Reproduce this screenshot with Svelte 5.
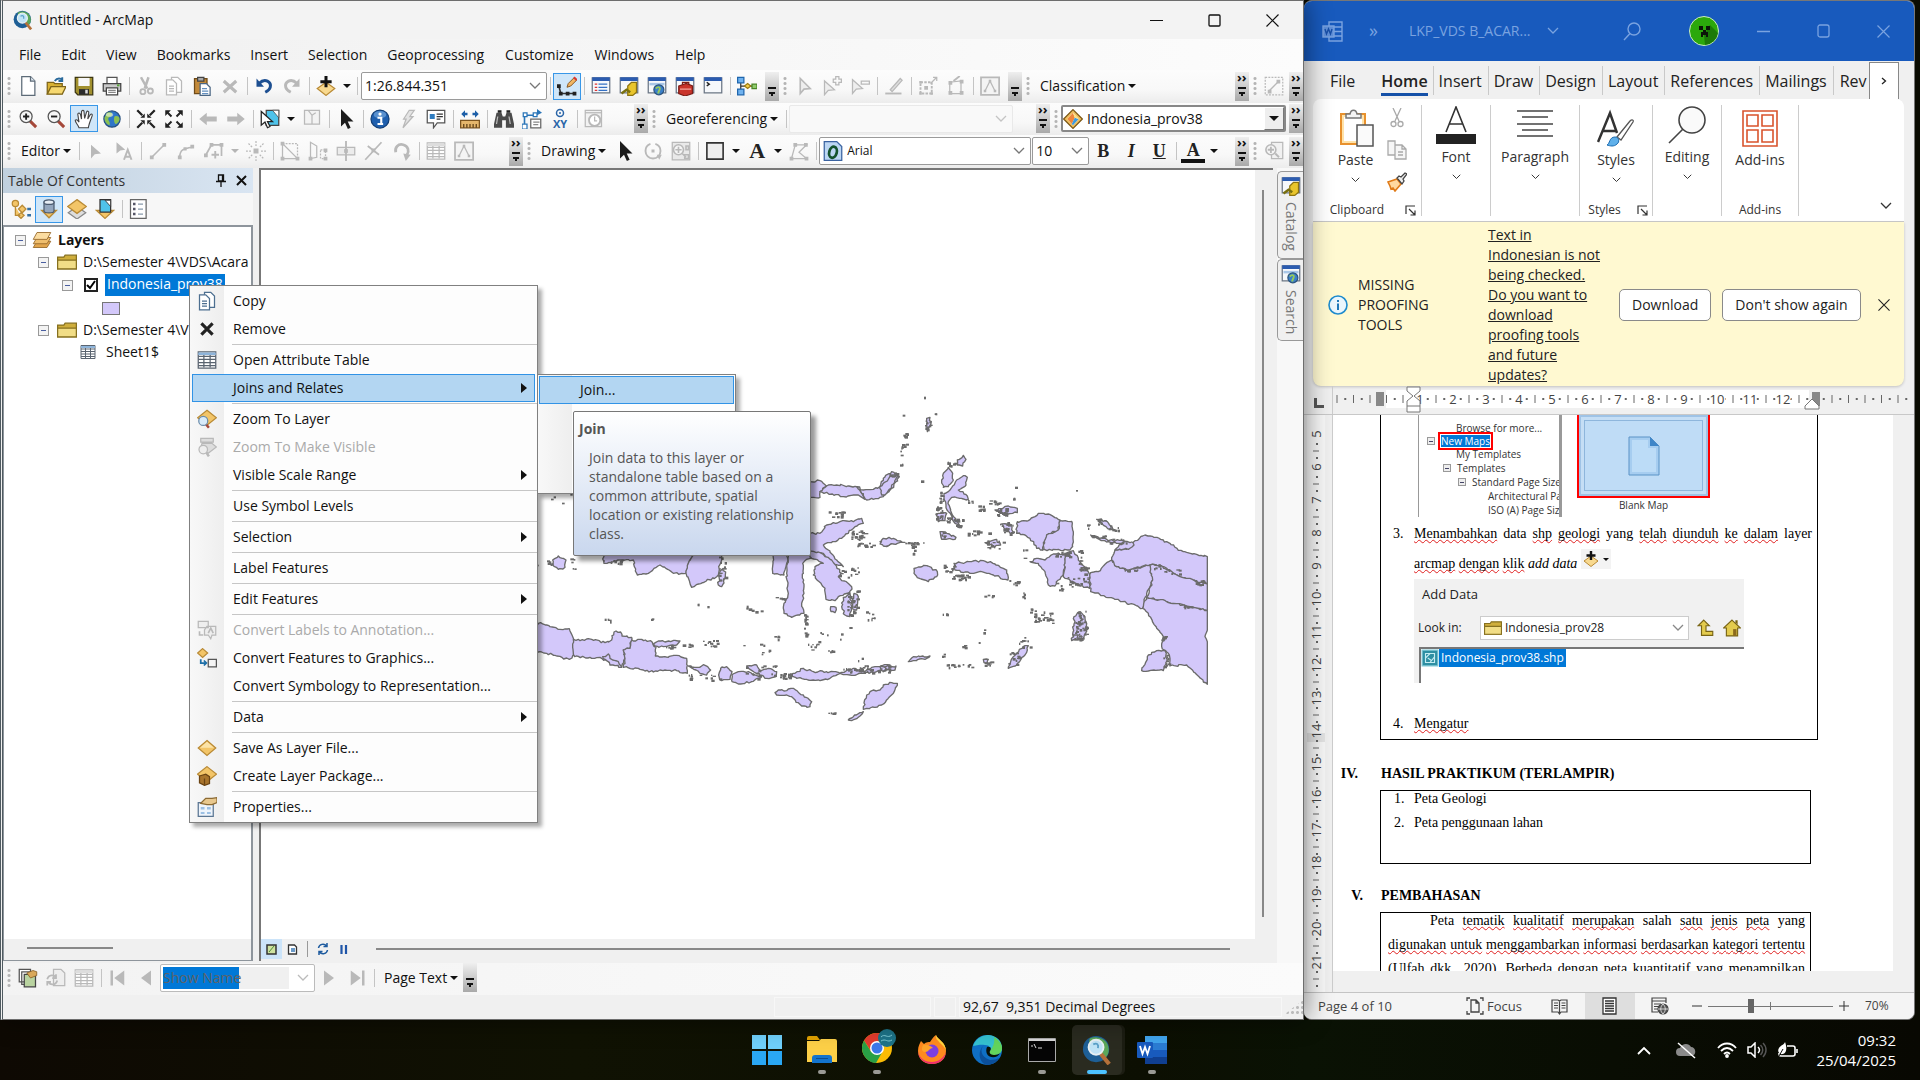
<script>
  // ---- Icon artwork, drawn on a 16 x 16 grid ----
  const G = '#b9b9b9';
  const diamond = '<path d="M8 2l7 6-7 6-7-6z" fill="#f3c568" stroke="#b98a35"/><path d="M8 3l5.500 4.800H2.500z" fill="#fbe3a8"/>';
  const win = (inner) => '<path d="M1 1.500h14v12H1z" fill="#f6f8fb" stroke="#6b7684"/><path d="M1 1h14v3H1z" fill="#2c5cb0"/>' + inner;
  const globe = '<circle cx="8" cy="8" r="6.500" fill="#2f76c8" stroke="#27507f"/><path d="M4 3c3-1 5 0 4 2s-3 1-3 3 2 2 1 5C3 12 2 9 2 7zM10 6c2-1 4 0 4 2s-2 4-3 4-2-4-1-6z" fill="#8cc152"/><ellipse cx="6" cy="4.500" rx="3" ry="1.600" fill="#fff" opacity=".5"/>';
  const lens = (s) => '<path d="M9.500 9.500l5 5" stroke="#a5483a" stroke-width="2.400"/><circle cx="6.500" cy="6" r="4.800" fill="#f7f7f7" stroke="#555"/>' + s;
  const pageG = (c) => `<path d="M6 1h5l3 3v9H6z" fill="#fff" stroke="${c}"/><path d="M2 3h5l3 3v9H2z" fill="#fff" stroke="${c}"/><path d="M4 8h4M4 10h4M4 12h4" stroke="${c}"/>`;
  const table = (c, h) => `<path d="M1 1.500h14v13H1z" fill="#fff" stroke="${c}"/><path d="M1 2h14v2H1z" fill="${h}"/><path d="M1 5h14M1 7.500h14M1 10h14M1 12.500h14M5.500 4v10M10.500 4v10" stroke="${c}"/>`;
  const icons = {
    new: '<path d="M3 .5h7l3.500 3.500v11.500H3z" fill="#fff" stroke="#5d6b78"/><path d="M10 .5v3.500h3.500" fill="#dde6ee" stroke="#5d6b78"/>',
    open: '<path d="M1 5h5l1 1h6v8H1z" fill="#d9b233" stroke="#7d6418"/><path d="M1 14.500l3-6h12l-3 6z" fill="#f6d870" stroke="#7d6418"/><path d="M7 4c2-3 5-2 6-1M13 1v3h-3" fill="none" stroke="#2a6a9c" stroke-width="1.500"/>',
    save: '<path d="M1 1h14v14H3l-2-2z" fill="#a1902e" stroke="#3b3512"/><path d="M3.500 1.500h9V8h-9z" fill="#f7f7f7"/><path d="M4 10.500h8V15H4z" fill="#2b2b2b"/><path d="M9 11h2v3H9z" fill="#ddd"/>',
    print: '<path d="M4 6V1h8v5" fill="#fff" stroke="#555"/><path d="M1 6h14v6H1z" fill="#c9c9c9" stroke="#444"/><path d="M3.500 9.500h9V15h-9z" fill="#fff" stroke="#444"/><path d="M5 11.500h6M5 13h6" stroke="#888"/><path d="M12 7.500h2" stroke="#58a33a" stroke-width="1.500"/>',
    cut: `<path d="M4 1l5 9M10 1L7 10" stroke="${G}" stroke-width="2"/><circle cx="5.500" cy="12.500" r="2" fill="none" stroke="${G}" stroke-width="1.500"/><circle cx="11.500" cy="12" r="2" fill="none" stroke="${G}" stroke-width="1.500"/>`,
    copyG: pageG(G),
    copyC: pageG('#4d6f90'),
    paste: '<path d="M2 2h10v12H2z" fill="#c38a3a" stroke="#6f4b19"/><path d="M4.500 1h5v3h-5z" fill="#aaa" stroke="#444"/><path d="M6.500 6h5l3 3v6.500h-8z" fill="#fff" stroke="#4b6784"/><path d="M8 10h4M8 12h5M8 14h5" stroke="#6390c0"/>',
    delG: `<path d="M3 4l10 9M13 4L3 13" stroke="${G}" stroke-width="2.500"/>`,
    del: '<path d="M3.500 3.500l9 9M12.500 3.500l-9 9" stroke="#222" stroke-width="2.500"/>',
    undo: '<path d="M4 6c5-5 10-1 9 3-.5 2-2 3-4 4" fill="none" stroke="#1d4f91" stroke-width="2.400"/><path d="M2 2v6.500h6z" fill="#1d4f91"/>',
    redo: `<path d="M12 6C7 1 2 5 3 9c.5 2 2 3 4 4" fill="none" stroke="${G}" stroke-width="2.400"/><path d="M14 2v6.500H8z" fill="${G}"/>`,
    add: '<path d="M8 5l7 5-7 5.500L1 10z" fill="#f8d98f" stroke="#b98a35"/><path d="M8 0v9M3.500 4.500h9" stroke="#111" stroke-width="2.400"/>',
    editor: '<path d="M1.500 8L3 14h11" fill="none" stroke="#333" stroke-width="1.300"/><path d="M0 6.500h3v3H0zM1.500 12.500h3v3h-3zM7 12.500h3v3H7zM12.500 12.500h3v3h-3z" fill="#222"/><path d="M8 9l1-3 5-5 2 2-5 5z" fill="#f1b562" stroke="#8b5a24" stroke-width=".8"/><path d="M13.500 1l2.200 2.200" stroke="#d33" stroke-width="1.500"/>',
    wToc: win('<path d="M3 6.500h2M3 9h2M3 11.500h2" stroke="#d33"/><path d="M6 6.500h7M6 9h7M6 11.500h7" stroke="#3470c4"/>'),
    wCat: win('<path d="M7 8l3-3h4v8l-3 2.500H7z" fill="#e9c52c" stroke="#8d7410"/><path d="M2 14l4-3 3 2" stroke="#7a7010" stroke-width="2" fill="none"/>'),
    wSearch: win('<path d="M2 5.500h12v2H2z" fill="#a9c7e8"/><circle cx="9.500" cy="11" r="4" fill="#3b7fc9" stroke="#2c557f"/><path d="M7 10c2-2 4-1 3 1s-1 2-1 3" stroke="#97ca5a" stroke-width="1.500" fill="none"/>'),
    wTool: win('<path d="M3 8l6-2 5 2v6l-6 2-5-2z" fill="#c9342b" stroke="#7c1c16"/><path d="M6 7V5h5v2" fill="none" stroke="#7c1c16"/><path d="M4 10.500h9" stroke="#f2a49e"/>'),
    wPy: win('<path d="M3 5l2 1.500L3 8" fill="none" stroke="#222" stroke-width="1.200"/>'),
    model: '<path d="M3 4v8M3 8h10" stroke="#333"/><path d="M.5 1h5v4.500h-5z" fill="#6fb2ef" stroke="#1f66ad"/><path d="M.5 10.500h5V15h-5z" fill="#6fb2ef" stroke="#1f66ad"/><path d="M6 8l2.500-2L11 8l-2.500 2z" fill="#f5cf49" stroke="#9c7a10"/><path d="M12 6.500h4v3.500h-4z" fill="#8ecb6a" stroke="#4a8528"/>',
    ptrG: `<path d="M5 2v12l3-3.500 5-.5z" fill="#eee" stroke="${G}" stroke-width="1.300"/>`,
    ptrGF: `<path d="M4 3v11l3-3.500 5-.5z" fill="${G}"/>`,
    ptrA: `<path d="M2 1v9l3-2.500 4-.5z" fill="${G}"/><path d="M8 15l3-8 3 8M9 12.500h4" fill="none" stroke="${G}" stroke-width="1.600"/>`,
    ptrPlus: `<path d="M2 4v11l3-3.500 5-.5z" fill="#eee" stroke="${G}"/><path d="M9 2.500h2V.5h2.500v2h2V5h-2v2H11V5H9z" fill="none" stroke="${G}"/>`,
    ptrMinus: `<path d="M2 3v11l3-3.500 5-.5z" fill="#eee" stroke="${G}"/><path d="M9 4h6.500v2.500H9z" fill="none" stroke="${G}"/>`,
    pencilG: `<path d="M1 14h13" stroke="${G}" stroke-width="1.500"/><path d="M5 11l8-9 1.500 1.500-8 9z" fill="#ddd" stroke="${G}"/>`,
    gridG: `<path d="M2 5h9v9H2z" fill="none" stroke="${G}" stroke-width="1.500" stroke-dasharray="2 1"/><path d="M5 8h3v3H5zM1 4h2v2H1zM1 13h2v2H1zM10 13h2v2h-2z" fill="${G}"/><path d="M10 6l5-5M12 1h3v3" stroke="${G}" fill="none"/>`,
    polyG: `<path d="M3 5l9-1v10H3z" fill="none" stroke="${G}"/><path d="M2 4h3v3H2zM11 3h3v3h-3zM2 12h3v3H2zM11 12h3v3h-3z" fill="${G}"/><path d="M6 4l5-4" stroke="${G}" stroke-width="1.500"/>`,
    boxA: `<path d="M.8 1h14.500v14H.8z" fill="#f4f4f4" stroke="${G}" stroke-width="1.400"/><path d="M4 12l4-8 4 8" fill="none" stroke="${G}"/><path d="M3 11h2v2H3zM7 3h2v2H7zM11 11h2v2h-2z" fill="${G}"/>`,
    lineBox: `<path d="M1 1h14v14H1z" fill="none" stroke="${G}" stroke-dasharray="1.500 1"/><path d="M4 12l8-8" stroke="${G}"/><path d="M3 11h3v3H3zM10 3h3v3h-3z" fill="${G}"/>`,
    zoomIn: lens('<path d="M6.500 3.500v5M4 6h5" stroke="#222" stroke-width="1.500"/>'),
    zoomOut: lens('<path d="M4 6h5" stroke="#222" stroke-width="1.500"/>'),
    pan: '<path d="M4 15c-1-3-3-4-3-6 1-1 2 0 3 1.500L3 4c1-1.500 2-.5 2.200.5L6 8V2c.5-1.500 2-1 2 0l.5 5.500L10 2.500c.5-1.300 2-.8 1.800.5L11 8l2-3.500c1-1 2-.2 1.500 1L12.500 11c-.5 2-1 3-1 4z" fill="#fff" stroke="#444" stroke-width=".9"/>',
    globe,
    inArr: '<g fill="#222"><path d="M7 7H3.500L7 3.500zM9 7V3.500L12.500 7zM7 9v3.500L3.500 9zM9 9h3.500L9 12.500z"/><path d="M1 1l4 4M15 1l-4 4M1 15l4-4M15 15l-4-4" stroke="#222" stroke-width="1.800"/></g>',
    outArr: '<g fill="#222"><path d="M1 1h4.500L1 5.500zM15 1v4.500L10.500 1zM1 15v-4.500L5.500 15zM15 15h-4.500l4.500-4.500z"/><path d="M2 2l4 4M14 2l-4 4M2 14l4-4M14 14l-4-4" stroke="#222" stroke-width="1.600"/></g>',
    left: `<path d="M1 8l6-5v3h8v4H7v3z" fill="${G}"/>`,
    right: `<path d="M15 8L9 3v3H1v4h8v3z" fill="${G}"/>`,
    selF: '<path d="M5 1h10v12H5z" fill="#4fc3ea" stroke="#444"/><path d="M10 1l5 6V1z" fill="#fff" stroke="#444" stroke-width=".6"/><path d="M1 2v11l3-2.500 2 4.500 2-1-2-4h4z" fill="#fff" stroke="#222"/>',
    clrF: `<path d="M2 1h12v11H2z" fill="#f3f3f3" stroke="${G}"/><path d="M5 1l3 4 3-2M8 5v7" stroke="${G}" fill="none"/>`,
    ptr: '<path d="M4 0v14l3.200-3 2.300 5 2.200-1-2.300-5H14z" fill="#1c1c1c"/>',
    info: '<circle cx="8" cy="8" r="7.200" fill="#1f5fae" stroke="#123f78"/><ellipse cx="8" cy="4.500" rx="5" ry="3" fill="#7fb0e4" opacity=".6"/><path d="M6 7h3v5h1.500M6 12h4" stroke="#fff" stroke-width="1.700" fill="none"/><circle cx="8" cy="4" r="1.300" fill="#fff"/>',
    bolt: `<path d="M9 1h4L9.500 6H12L4 15l2.500-7H4.500z" fill="#e4e4e4" stroke="${G}"/>`,
    popup: '<path d="M1 1h14v10H9l-3 4v-4H1z" fill="#fff" stroke="#555"/><path d="M3 4h4v4H3z" fill="#2f7cc0"/><path d="M8.500 4h5M8.500 6h5M8.500 8h3" stroke="#333"/>',
    measure: '<path d="M1 4l3-3v2h2v2H4v2zM15 4l-3-3v2h-2v2h2v2z" fill="#1d5fa8"/><path d="M.5 9h15v6H.5z" fill="#e5b66c" stroke="#7c5420"/><path d="M3 12v3M5.500 12v3M8 12v3M10.500 12v3M13 12v3" stroke="#5e3e14"/>',
    bino: '<path d="M2 3h4l1 3h2l1-3h4l2 9v3H9.500V9h-3v6H0v-3z" fill="#4b4b4b"/><path d="M3 1h3v2H3zM10 1h3v2h-3z" fill="#222"/><path d="M3 6l-1 6M12 6l1 6" stroke="#bbb"/>',
    route: '<path d="M2 14V5h8" fill="none" stroke="#2a75b8" stroke-width="1.300"/><path d="M0 12h4v4H0zM1 3h3v3H1zM9 3h3v3H9z" fill="#fff" stroke="#2a75b8"/><path d="M12 0l4 3-4 2z" fill="#2a75b8"/><path d="M7 8h8v7H7z" fill="#fff" stroke="#666"/><path d="M9 10.500h5M9 12.500h4" stroke="#888"/>',
    timeG: `<path d="M1 1h13v13H1z" fill="#f2f2f2" stroke="${G}"/><path d="M1 3h13" stroke="${G}"/><circle cx="8.500" cy="9" r="4.500" fill="#fff" stroke="${G}" stroke-width="1.500"/><path d="M8.500 6v3.500h2" stroke="${G}" fill="none"/>`,
    segG: `<path d="M3 13L13 3" stroke="${G}" stroke-width="1.300"/><path d="M1.500 11.500h3v3h-3zM11.500 1.500h3v3h-3z" fill="${G}"/>`,
    arcG: `<path d="M3 13c0-6 3-7 10-8" fill="none" stroke="${G}" stroke-width="1.300"/><path d="M1.500 11.500h3v3h-3zM11.500 3h3v3h-3zM6 5h2.500v2.500H6z" fill="${G}"/>`,
    traceG: `<path d="M1 12l5-9h8v9" fill="none" stroke="${G}" stroke-width="1.400"/><path d="M4.500 1.500h3v3h-3zM12.500 1.500h3v3h-3zM0 10h3v3H0z" fill="${G}"/><path d="M9 8v6M6 11h6" stroke="${G}" stroke-width="1.500"/>`,
    burstG: `<path d="M6 6h4v4H6z" fill="${G}"/><path d="M8 0v4M8 12v4M0 8h4M12 8h4M2 2l3 3M11 11l3 3M14 2l-3 3M5 11l-3 3" stroke="${G}" stroke-dasharray="1.500 1"/>`,
    cutG: `<path d="M2 2v12h12z" fill="none" stroke="${G}"/><path d="M2 2h12v12" fill="none" stroke="${G}" stroke-dasharray="1.500 1"/><path d="M.5.5h3v3h-3zM.5 12.500h3v3h-3zM12.500 12.500h3v3h-3z" fill="${G}"/>`,
    splitG: `<path d="M2 1v13l5-1V4z" fill="none" stroke="${G}"/><path d="M10 7h4v7h-4z" fill="none" stroke="${G}" stroke-dasharray="1.500 1"/><path d="M.5 12.500h3v3h-3zM12.500 6h3v3h-3zM12.500 12.500h3v3h-3z" fill="${G}"/>`,
    centerG: `<path d="M1 5h14v6H1z" fill="#ececec" stroke="${G}"/><path d="M8 0v16" stroke="${G}" stroke-width="1.500"/><path d="M6.500 6.500h3v3h-3z" fill="${G}"/>`,
    crossG: `<path d="M1 15L14 1M3 4l9 7" stroke="${G}" stroke-width="1.400"/><path d="M6 6h3v3H6z" fill="${G}"/>`,
    rotG: `<path d="M3 9c-1-4 2-7 6-6s5 5 3 8" fill="none" stroke="${G}" stroke-width="2.200"/><path d="M9 10l2 6 4-5z" fill="${G}"/>`,
    tableG: table(G, '#ddd'),
    tableC: table('#5a6470', '#8eb4da'),
    rotD: `<circle cx="8" cy="8" r="6" fill="none" stroke="${G}" stroke-width="1.500" stroke-dasharray="26 4"/><path d="M6.800 6.800h2.400v2.400H6.800zM11 11l4 0-2 4z" fill="${G}"/>`,
    zoomG: `<path d="M6 1h9v13H6z" fill="#f1f1f1" stroke="${G}"/><circle cx="5.500" cy="7" r="4" fill="#f6f6f6" stroke="${G}" stroke-width="1.300"/><path d="M5.500 4.500v5M3 7h5M9 10l3 3" stroke="${G}" stroke-width="1.500"/>`,
    gridZ: `<path d="M1 1h14v14H1z" fill="#e9e9e9" stroke="${G}"/><circle cx="6" cy="7" r="4" fill="#f6f6f6" stroke="${G}" stroke-width="1.300"/><path d="M6 4.500v5M3.500 7h5M9 10l3 3M12 4h2v3h-2zM11 11h3v3h-3z" stroke="${G}" stroke-width="1.300"/>`,
    rect: '<path d="M1.500 1.500h13v13h-13z" fill="#eee" stroke="#333" stroke-width="1.300"/>',
    nodesG: `<path d="M2 14L5 3h9L8 9l6 5z" fill="none" stroke="${G}"/><path d="M3.500 1.500h3v3h-3zM12 1.500h3v3h-3zM.5 12.500h3v3h-3zM12.500 12.500h3v3h-3z" fill="${G}"/>`,
    layer3: '<path d="M4 9h11l-3 5H1z" fill="#e2a54c" stroke="#96682a" stroke-width=".7"/><path d="M4 6h11l-3 5H1z" fill="#efbe6d" stroke="#96682a" stroke-width=".7"/><path d="M4 2h11l-3 5.500H1z" fill="#fbdca0" stroke="#96682a" stroke-width=".7"/>',
    folder: '<path d="M.5 4h5l1-1.500h9v11H.5z" fill="#cfae3c" stroke="#86701f"/><path d="M.5 6.500h15v7H.5z" fill="#f1dd86" stroke="#86701f"/>',
    tDraw: '<circle cx="3.500" cy="3.500" r="2.500" fill="#f3c568" stroke="#b98a35"/><path d="M3.500 6v7h4M9 5l3 3-3 3-3-3zM8 11l2.500 2-2.500 2.500L5.500 13z" fill="#f3c568" stroke="#b98a35"/><path d="M13 8h3M13 13h3" stroke="#3470a4" stroke-width="2"/>',
    tSrc: '<path d="M2 9l6 6 6-6z" fill="#f3c568" stroke="#b98a35"/><path d="M4 2.500v7c0 2 8 2 8 0v-7z" fill="#93a6be" stroke="#4b5b70"/><ellipse cx="8" cy="2.500" rx="4" ry="1.800" fill="#e6edf5" stroke="#4b5b70"/>',
    tVis: '<path d="M8 6l7 5-7 5-7-5z" fill="#ddd" stroke="#888"/><path d="M8 .5l7.500 5.500L8 11.500.5 6z" fill="#f3c568" stroke="#b98a35"/>',
    tSel: '<path d="M1 9l7 6.500L15 9z" fill="#f3c568" stroke="#b98a35"/><path d="M4 .5h8.500v10H4z" fill="#4fc3ea" stroke="#333"/><path d="M8 1l4.500 5V1z" fill="#fff" stroke="#333" stroke-width=".7"/>',
    tOpt: '<path d="M2 .5h12.500v15H2z" fill="#fff" stroke="#666"/><path d="M4 3h2v2H4zM4 7h2v2H4zM4 11h2v2H4z" fill="#556"/><path d="M8 4h4M8 8h4M8 12h4" stroke="#89a"/>',
    zoomLayer: '<path d="M8 1l7.500 6L8 13 .5 7z" fill="#f3c568" stroke="#b98a35"/><path d="M7 12l2.500 3" stroke="#a5483a" stroke-width="2"/><circle cx="5" cy="9.500" r="3.600" fill="#d8ebfa" stroke="#6b8cab"/>',
    zoomVis: `<path d="M3 1h10v3H3zM4 5h8l3.500 3L9 13 3 9z" fill="#ddd" stroke="${G}"/><circle cx="5" cy="10" r="3.400" fill="#eee" stroke="${G}"/><path d="M7.500 12.500l2 3" stroke="${G}" stroke-width="2"/>`,
    labA: `<path d="M1 1h8v5H1zM8 5h7v7h-3l-1 3-2-3H6V8z" fill="#eee" stroke="${G}"/><path d="M9 10.500l2-4 2 4M2 9v3h3" fill="none" stroke="${G}" stroke-width="1.300"/>`,
    featG: '<path d="M4.500.5l4 3.500-4 3.500L.5 4z" fill="#f3c568" stroke="#b98a35"/><path d="M3 9v3h4M5.500 10l2 2-2 2" fill="none" stroke="#1d6fa8" stroke-width="1.400"/><path d="M9 9h6.500v6H9z" fill="#f4f4f4" stroke="#555"/>',
    layer: diamond,
    pack: '<path d="M8 .5l7.500 6L8 12.500.5 6.500z" fill="#f3c568" stroke="#b98a35"/><path d="M2 8l5-1.500 3 2V14l-4 1.500-4-2z" fill="#a8742c" stroke="#6b4413"/><path d="M6 10v5" stroke="#6b4413"/>',
    props: '<path d="M1 4.500h12v11H1z" fill="#eef4fb" stroke="#5b7693"/><path d="M3 8h3v2H3zM8 8h3v2H8zM3 12h3v1.500H3zM8 12h3v1.500H8z" fill="#9cc0e4"/><path d="M3 5l4-4h5l4-.5v4l-4 1.500H8z" fill="#e8c88e" stroke="#8c6a33"/>',
    book: '<path d="M1 1h9v10H1zM3 3h9v10H3z" fill="#fff" stroke="#555"/><path d="M5 5h9v10H5z" fill="#b9d3a0" stroke="#444"/><path d="M7 4l5-2 3 1v3l-5 2z" fill="#d9a85a" stroke="#80571c" stroke-width=".6"/>',
    refG: `<path d="M6 1h6l3 3v10H6z" fill="#eee" stroke="${G}"/><path d="M1 9c1-4 6-4 7-1M9 10c-1 4-6 4-7 1M8 5v3H5M1 14v-3h3" stroke="${G}" stroke-width="1.400" fill="none"/>`,
    first: `<path d="M3 2v12" stroke="${G}" stroke-width="2"/><path d="M13 2v12L5 8z" fill="${G}"/>`,
    prev: `<path d="M12 2v12L4 8z" fill="${G}"/>`,
    next: `<path d="M4 2v12l8-6z" fill="${G}"/>`,
    last: `<path d="M13 2v12" stroke="${G}" stroke-width="2"/><path d="M3 2v12l8-6z" fill="${G}"/>`,
    oType: '<path d="M1 .5h10l4 4v11H1z" fill="#bcd6f3" stroke="#3a62a0"/><ellipse cx="8" cy="9" rx="3" ry="4.500" fill="none" stroke="#14532d" stroke-width="2.200" transform="rotate(15 8 9)"/>',
    geoLayer: '<path d="M8 .5L15.500 8 8 15.500.5 8z" fill="#f0c060" stroke="#7a5512"/><path d="M8 3l4.500 5L8 13 3.500 8z" fill="#fff"/><path d="M8 3l1.500 4L7 12 3.500 8z" fill="#f0863c"/><path d="M9.500 7l3 1L8 13 7 12z" fill="#3b9be0"/><path d="M8 3l4.500 5-3-1z" fill="#ffe27a"/>',
    arcmap: '<circle cx="7.500" cy="7.500" r="7" fill="#1e5f96"/><path d="M4 2c4-2 9 0 10 4s-1 6-3 7c1-3-1-4-3-4s-5-1-4-7z" fill="#5ba75a"/><path d="M10 10l4.500 5.500" stroke="#b5713a" stroke-width="2.200"/><circle cx="7.500" cy="6.500" r="4" fill="#bfe3f6" stroke="#e8f0f4"/><path d="M6 5c2-1 3 0 2.500 2" stroke="#5aa0c8" fill="none"/>',
    up: '<path d="M6 1l5 5H8v5h6v3.500H4V6H1z" fill="#e3cb4e" stroke="#786414"/>',
    home: '<path d="M8 1l7.500 7H13v7H3V8H.5z" fill="#e3cb4e" stroke="#786414"/><path d="M9 9h3v6H9z" fill="#8b6a1c"/><path d="M11 1h2v4l-2-2z" fill="#786414"/>',
    shp: '<path d="M1 1h14v14H1z" fill="#2e8fa3" stroke="#7ec7d5"/><path d="M4 4h8v8H4zM4 8l4-4M8 12l4-5M6 8l3 2" stroke="#c4ecf2" fill="none"/>'
  };

  // ---- ArcMap toolbars: i icon, s separator, t menu text, a arrow, fill spacer ----
  const S = { s: 1 }, A = { a: 1 }, F = { fill: 1 };
  const ic = (...n) => n.map((i) => ({ i }));
  const rows = [
    ['r1', [
      [...ic('new', 'open', 'save', 'print'), S, ...ic('cut', 'copyG', 'paste', 'delG'), S, ...ic('undo', 'redo'), S, { i: 'add' }, A, S, { combo: '1:26.844.351', cls: 'scale' }, S, { i: 'editor', on: 1 }, S, ...ic('wToc', 'wCat', 'wSearch', 'wTool', 'wPy'), S, { i: 'model' }, F],
      [...ic('ptrG', 'ptrPlus', 'ptrMinus'), S, { i: 'pencilG' }, S, ...ic('gridG', 'polyG'), S, { i: 'boxA' }, F],
      [{ t: 'Classification' }, F],
      [{ i: 'lineBox' }, F]
    ]],
    ['r2', [
      [...ic('zoomIn', 'zoomOut'), { i: 'pan', on: 1 }, { i: 'globe' }, S, ...ic('inArr', 'outArr'), S, ...ic('left', 'right'), S, { i: 'selF' }, A, { i: 'clrF' }, S, { i: 'ptr' }, S, ...ic('info', 'bolt', 'popup'), S, { i: 'measure' }, S, ...ic('bino', 'route'), { xy: 1 }, S, { i: 'timeG' }, F],
      [{ t: 'Georeferencing' }, S, { combo: '', cls: 'georef' }, F],
      [{ combo: 'Indonesia_prov38', cls: 'layerpick', icon: 'geoLayer' }, F]
    ]],
    ['r3', [
      [{ t: 'Editor' }, S, ...ic('ptrGF', 'ptrA'), S, ...ic('segG', 'arcG', 'traceG'), { a: 1, dim: 1 }, { i: 'burstG' }, S, ...ic('cutG', 'splitG', 'centerG', 'crossG', 'rotG'), S, ...ic('tableG', 'boxA'), F],
      [{ t: 'Drawing' }, ...ic('ptr', 'rotD', 'gridZ'), S, { i: 'rect' }, A, { l: 'A', cls: 'lbig' }, A, { i: 'nodesG' }, S, { combo: 'Arial', cls: 'face', icon: 'oType' }, { combo: '10', cls: 'size' }, { l: 'B' }, { l: 'I', cls: 'lit' }, { l: 'U', cls: 'lun' }, S, { l: 'A', cls: 'lcol' }, A, F],
      [{ i: 'zoomG' }, F]
    ]]
  ];
  const pageBar = [...ic('book', 'refG', 'tableG'), S, ...ic('first', 'prev'), { combo: 'Show Name', cls: 'showname' }, ...ic('next', 'last'), S, { t: 'Page Text' }];

  const menus = ['File', 'Edit', 'View', 'Bookmarks', 'Insert', 'Selection', 'Geoprocessing', 'Customize', 'Windows', 'Help'];

  const ctx = [
    { n: 'Copy', i: 'copyC' }, { n: 'Remove', i: 'del' }, 0,
    { n: 'Open Attribute Table', i: 'tableC' }, { n: 'Joins and Relates', sub: 1, hot: 1 }, 0,
    { n: 'Zoom To Layer', i: 'zoomLayer' }, { n: 'Zoom To Make Visible', i: 'zoomVis', off: 1 }, { n: 'Visible Scale Range', sub: 1 }, 0,
    { n: 'Use Symbol Levels' }, 0, { n: 'Selection', sub: 1 }, 0, { n: 'Label Features' }, 0, { n: 'Edit Features', sub: 1 }, 0,
    { n: 'Convert Labels to Annotation...', i: 'labA', off: 1 }, { n: 'Convert Features to Graphics...', i: 'featG' }, { n: 'Convert Symbology to Representation...' }, 0,
    { n: 'Data', sub: 1 }, 0, { n: 'Save As Layer File...', i: 'layer' }, { n: 'Create Layer Package...', i: 'pack' }, 0,
    { n: 'Properties...', i: 'props' }
  ];

  // ---- Map geometry, in thirds of a pixel ----
  let seed = 7;
  const rnd = () => ((seed = (seed * 16807) % 2147483647) / 2147483647);
  function rough(str, closed, jit = 6) {
    const p = str.split(' ').map((s) => s.split(',').map(Number));
    const n = closed ? p.length : p.length - 1;
    let d = 'M' + p[0];
    for (let k = 0; k < n; k++) {
      const a = p[k], b = p[(k + 1) % p.length];
      const len = Math.hypot(b[0] - a[0], b[1] - a[1]);
      const straight = a[0] === b[0] && a[0] === 982;
      const m = straight ? 1 : Math.max(1, Math.round(len / 7));
      for (let j = 1; j < m; j++) {
        d += `L${Math.round(a[0] + ((b[0] - a[0]) * j) / m + (rnd() - 0.5) * jit)},${Math.round(a[1] + ((b[1] - a[1]) * j) / m + (rnd() - 0.5) * jit)}`;
      }
      if (!(closed && k === n - 1)) d += 'L' + b;
    }
    return d + (closed ? 'Z' : '');
  }
  const scatter = (list) => list.flatMap(([x, y, w, h, n]) =>
    Array.from({ length: n }, () => [Math.round(x + rnd() * w), Math.round(y + rnd() * h), 4 + Math.round(rnd() * 7), 4 + Math.round(rnd() * 4)]));

  const west = [
    '10,800 32,788 50,795 90,808 118,806 130,835 134,885 118,898 75,886 30,875 10,872',
    '130,838 150,842 185,838 225,848 245,840 252,816 272,816 276,828 305,832 300,865 280,870 285,895 275,920 240,908 215,895 180,892 134,890 128,862',
    '218,890 235,882 240,895 265,905 275,922 240,915',
    '305,840 362,842 378,862 376,888 415,892 440,886 470,895 472,940 440,932 405,930 370,936 330,928 280,922 285,895 280,870 300,865',
    '370,852 385,843 450,843 440,855 400,860 375,858',
    '475,918 500,922 520,914 542,930 530,945 510,940',
    '566,945 572,925 590,920 606,935 600,958 575,962',
    '606,945 625,935 655,935 695,950 665,965 625,972 606,965',
    '650,918 680,915 690,930 715,925 740,935 738,950 710,955 690,945',
    '785,945 820,925 850,935 890,935 930,940 900,955 870,962 830,958 800,955',
    '930,940 970,925 1000,935 1040,920 1080,915 1082,928 1040,935 960,945',
    '735,998 745,990 770,992 790,985 820,1005 845,1025 840,1040 815,1038 790,1015 770,1005 740,1005',
    '1000,1048 1010,1005 1030,990 1050,990 1060,975 1085,968 1102,970 1090,1000 1055,1035 1010,1045',
    '955,1080 970,1070 1000,1055 985,1072 965,1082',
    '218,570 222,610 265,600 310,600 322,645 355,640 390,615 430,640 468,640 475,610 500,570',
    '500,570 475,610 468,640 485,682 560,650 575,600 580,570',
    '568,640 580,625 586,645 575,680 565,675',
    '68,600 85,588 108,600 105,622 85,628 68,615',
    '730,570 728,640 762,645 770,610 775,570',
    '775,570 770,640 775,700 760,745 762,760 785,772 822,760 815,730 822,700 818,610 830,598 850,595 845,570',
    '835,520 870,520 890,495 930,485 970,485 995,475 1000,490 975,500 935,535 880,555 895,570 920,600 940,620 900,610 880,580 835,575',
    '835,575 870,578 905,600 935,640 925,650 965,680 960,700 925,710 915,722 888,718 885,685 850,645 855,620 880,610 840,590',
    '835,365 870,362 890,378 870,395 870,412 835,412',
    '890,378 920,375 980,380 1005,418 985,405 940,410 870,395',
    '980,380 1000,390 1030,388 1050,380 1060,355 1085,335 1108,350 1085,385 1060,410 1010,420',
    '940,712 960,702 965,740 960,770 945,765 935,740',
    '972,700 985,710 980,750 965,745',
    '902,740 918,742 915,758 903,755', '1050,545 1075,535 1090,548 1070,560'
  ];
  const east = [
    '0,492 10,475 40,475 75,487 40,492 10,498',
    '5,345 0,320 30,290 48,278 52,290 40,312 15,345',
    '185,305 190,280 205,262 215,275 220,300 205,320 190,322',
    '192,340 210,330 230,300 250,287 262,292 258,315 235,330 262,348 265,358 215,352 205,365 215,400 240,440 225,430 205,395 198,375 192,352',
    '232,240 250,226 258,238 248,258 232,255', '168,402 200,400 195,422 175,425', '180,455 200,460 228,472 225,478 185,478',
    '102,565 140,557 172,575 170,590 145,605 118,595 102,580',
    '222,550 275,545 310,542 345,552 380,570 384,600 340,585 305,575 270,580 225,570',
    '315,488 350,478 362,495 345,500', '365,432 395,435 400,460 380,455', '345,390 385,378 412,385 412,398 375,402',
    '412,425 445,422 475,400 505,402 540,420 535,450 500,465 488,510 470,505 450,475 435,465 410,460',
    '540,422 575,424 578,450 578,500 570,510 488,510 500,465 535,450',
    '450,545 470,535 495,540 520,522 560,520 555,550 550,585 535,600 525,618 505,615 495,575 475,550',
    '560,520 580,512 600,545 625,575 632,600 628,625 600,618 550,590 555,550',
    '632,578 655,575 680,548 695,540 710,560 740,570 810,555 818,600 800,640 788,685 700,655 632,635 628,600',
    '705,510 740,508 765,482 795,465 850,480 910,515 982,530 982,612 900,590 840,555 810,555 740,570 710,560 695,540',
    '810,555 840,555 900,590 982,612 982,692 930,680 860,665 800,652 818,600',
    '800,652 860,665 930,680 982,692 982,750 975,770 982,785 982,913 920,855 870,858 865,820 845,800 850,770 830,745 805,700 788,685',
    '785,872 805,825 830,812 855,812 862,840 850,872',
    '650,418 675,422 705,450 690,448', '632,465 680,478 740,485 725,490 680,486', '728,487 755,486 762,495 745,508 705,510',
    '580,770 582,710 600,695 615,710 620,750 610,775 595,780', '575,782 580,765 595,765 592,780',
    '385,865 400,830 430,800 445,797 435,825 410,855', '85,845 100,830 150,828 135,838 100,842', '0,860 48,858 45,870 5,872',
    '140,115 150,112 152,135 142,155', '310,838 325,838 322,850 312,848'
  ];
  const westDots = scatter([
    [20, 600, 45, 15, 7], [110, 580, 25, 50, 5], [30, 400, 100, 30, 4], [215, 595, 60, 15, 10], [565, 590, 22, 70, 12], [450, 850, 40, 10, 6], [515, 840, 45, 18, 14], [220, 775, 25, 8, 4],
    [470, 730, 80, 10, 3], [625, 735, 70, 20, 6], [730, 710, 35, 6, 4], [725, 825, 20, 15, 4], [640, 850, 80, 35, 7], [822, 760, 5, 70, 16], [830, 850, 35, 20, 7], [895, 450, 45, 22, 14],
    [960, 510, 45, 30, 22], [980, 545, 55, 14, 12], [925, 620, 60, 30, 12], [950, 690, 35, 75, 26], [1005, 750, 30, 40, 8], [855, 815, 80, 30, 6], [895, 860, 12, 18, 5], [890, 1055, 25, 6, 5],
    [475, 940, 100, 20, 12], [640, 915, 100, 40, 16], [750, 938, 40, 16, 16], [940, 915, 140, 22, 34], [950, 880, 60, 20, 2], [375, 855, 60, 8, 8], [360, 775, 8, 6, 2], [950, 800, 10, 5, 1]
  ]);
  const eastDots = scatter([
    [62, 155, 20, 45, 10], [60, 200, 8, 55, 6], [135, 105, 14, 50, 10], [160, 98, 8, 8, 2], [132, 50, 2, 2, 1], [66, 104, 2, 2, 1], [25, 275, 30, 14, 6], [120, 298, 3, 3, 1], [195, 245, 35, 15, 6],
    [178, 325, 14, 50, 12], [165, 375, 20, 45, 20], [195, 405, 16, 22, 8], [218, 410, 35, 30, 10], [180, 450, 15, 20, 5], [262, 350, 15, 18, 4], [292, 375, 20, 14, 6], [325, 360, 35, 20, 8], [350, 380, 30, 28, 20],
    [360, 425, 45, 38, 14], [235, 445, 95, 22, 10], [312, 480, 60, 28, 12], [405, 315, 3, 6, 1], [397, 353, 8, 4, 2], [587, 329, 2, 2, 1], [92, 488, 10, 32, 10], [75, 486, 55, 3, 9], [425, 505, 12, 30, 3],
    [190, 552, 35, 24, 12], [215, 582, 50, 16, 22], [385, 600, 35, 20, 8], [425, 635, 12, 22, 5], [450, 680, 4, 15, 3], [460, 690, 60, 38, 26], [312, 643, 25, 6, 4], [185, 692, 18, 10, 3], [583, 692, 36, 90, 46],
    [525, 515, 45, 14, 20], [595, 510, 8, 60, 14], [600, 560, 22, 20, 8], [555, 590, 70, 30, 18], [615, 433, 10, 10, 3], [650, 415, 30, 15, 8], [685, 435, 40, 18, 8], [635, 465, 40, 6, 5], [670, 476, 70, 12, 8], [415, 770, 36, 30, 8], [385, 815, 35, 40, 14],
    [245, 793, 12, 10, 4], [280, 745, 55, 45, 3], [180, 820, 14, 8, 3], [195, 852, 80, 10, 14], [308, 832, 30, 24, 8], [0, 856, 30, 16, 8], [725, 565, 50, 8, 8], [820, 552, 25, 12, 6], [850, 568, 50, 14, 8], [945, 598, 24, 14, 12], [910, 675, 30, 10, 8], [840, 765, 15, 14, 8], [850, 815, 14, 50, 10], [530, 600, 15, 28, 6]
  ]);
  const westShapes = west.map((s) => rough(s, true));
  const eastShapes = east.map((s) => rough(s, true));

  // ---- Word ----
  const tabs = ['Insert', 'Draw', 'Design', 'Layout', 'References', 'Mailings', 'Rev'];
  const hNums = Array.from({ length: 12 }, (_, k) => k + 1);
  const vNums = Array.from({ length: 17 }, (_, k) => k + 5);
</script>

{#snippet svg(name, size = 20)}
  <svg width={size} height={size} viewBox="0 0 16 16" fill="none" aria-hidden="true">{@html icons[name]}</svg>
{/snippet}

{#snippet chev(cls = '')}
  <svg class={'chev ' + cls} width="12" height="8" viewBox="0 0 12 8" aria-hidden="true"><path d="M1 1l5 5 5-5" fill="none" stroke="currentColor" stroke-width="1.300" /></svg>
{/snippet}

{#snippet items(list)}
  {#each list as it}
    {#if it.i}
      <button class="ib" class:on={it.on} aria-label={it.i}>{@render svg(it.i)}</button>
    {:else if it.s}
      <span class="sep"></span>
    {:else if it.a}
      <button class="arrow" class:dim={it.dim} aria-label="More"></button>
    {:else if it.t}
      <button class="tmenu">{it.t}<i></i></button>
    {:else if it.l}
      <button class={'letter ' + (it.cls ?? '')}>{it.l}</button>
    {:else if it.xy}
      <button class="ib xy" aria-label="Go to XY"><svg width="10" height="10" viewBox="0 0 10 10"><circle cx="5" cy="5" r="3.500" fill="none" stroke="#2a65a8" stroke-width="1.500" /><circle cx="5" cy="5" r="1" fill="#2a65a8" /></svg>XY</button>
    {:else if it.fill}
      <span class="fill"></span>
    {:else if it.cls}
      <span class={'combo ' + it.cls}>
        {#if it.icon}{@render svg(it.icon)}{/if}
        <select aria-label={it.cls}><option>{it.combo}</option></select>
        {#if it.cls === 'layerpick'}<b class="drop"></b>{:else}{@render chev()}{/if}
      </span>
    {/if}
  {/each}
{/snippet}

<div class="desktop">
  <div class="windows">
    <main class="arcmap">
      <header class="title">
        {@render svg('arcmap')}
        <h1>Untitled - ArcMap</h1>
        <span class="fill"></span>
        <button aria-label="Minimize"><svg width="13" height="13" viewBox="0 0 13 13"><path d="M0 6.500h13" stroke="#111" /></svg></button>
        <button aria-label="Maximize"><svg width="13" height="13" viewBox="0 0 13 13"><rect x="1" y="1" width="11" height="11" rx="1" fill="none" stroke="#111" stroke-width="1.300" /></svg></button>
        <button aria-label="Close"><svg width="13" height="13" viewBox="0 0 13 13"><path d="M.5.5l12 12M12.500.5l-12 12" stroke="#111" stroke-width="1.200" /></svg></button>
      </header>
      <nav class="menubar">
        {#each menus as m}<button>{m}</button>{/each}
      </nav>
      <div class="bars">
        {#each rows as [cls, bars]}
          <div class={'barrow ' + cls}>
            {#each bars as bar, b}
              <div class="bar" role="toolbar" aria-label={cls + b}>
                <span class="grip"></span>
                {@render items(bar)}
                <button class="over" class:more={!(cls === 'r1' && b < 2)} aria-label="Toolbar options"></button>
              </div>
            {/each}
          </div>
        {/each}
      </div>

      <section class="body">
        <aside class="toc">
          <div class="tochead">
            <h2>Table Of Contents</h2>
            <button aria-label="Pin"><svg width="10" height="14" viewBox="0 0 10 14"><path d="M2.500 1h5v6h-5zM0 7.500h10M5 8v5M6.500 1v6" stroke="#111" stroke-width="1.300" fill="none" /></svg></button>
            <button aria-label="Close"><svg width="11" height="11" viewBox="0 0 11 11"><path d="M1 1l9 9M10 1l-9 9" stroke="#111" stroke-width="2" /></svg></button>
          </div>
          <div class="toctools">
            <button class="ib" aria-label="List by drawing order">{@render svg('tDraw')}</button>
            <button class="ib on" aria-label="List by source">{@render svg('tSrc')}</button>
            <button class="ib" aria-label="List by visibility">{@render svg('tVis')}</button>
            <button class="ib" aria-label="List by selection">{@render svg('tSel')}</button>
            <span class="sep"></span>
            <button class="ib" aria-label="Options">{@render svg('tOpt')}</button>
          </div>
          <div class="tree">
            <ul>
              <li class="d0"><button class="exp" aria-label="Collapse"></button>{@render svg('layer3')}<b>Layers</b></li>
              <li class="d1"><button class="exp" aria-label="Collapse"></button>{@render svg('folder')}<span>D:\Semester 4\VDS\Acara</span></li>
              <li class="d2"><button class="exp" aria-label="Collapse"></button><input id="lyr" type="checkbox" checked /><label for="lyr">Indonesia_prov38</label></li>
              <li class="d3"><i class="swatch"></i></li>
              <li class="d1"><button class="exp" aria-label="Collapse"></button>{@render svg('folder')}<span>D:\Semester 4\V</span></li>
              <li class="d4">{@render svg('tableC', 16)}<span>Sheet1$</span></li>
            </ul>
            <div class="tocscroll"><i></i></div>
          </div>
        </aside>

        <div class="mapframe">
          <div class="canvas">
            <svg class="map" viewBox="261 170 992 768" preserveAspectRatio="xMinYMin meet" role="img" aria-label="Provinces of Indonesia">
              <g transform="translate(530 360) scale(.33333)">
                {#each westShapes as d}<path {d} />{/each}
                {#each westDots as [x, y, w, h]}<rect {x} {y} width={w} height={h} />{/each}
              </g>
              <g transform="translate(880 380) scale(.33333)">
                {#each eastShapes as d}<path {d} />{/each}
                {#each eastDots as [x, y, w, h]}<rect {x} {y} width={w} height={h} />{/each}
              </g>
            </svg>
          </div>
          <div class="vscroll"><i></i></div>
          <div class="viewbar">
            <button class="vb on" aria-label="Data view"><svg width="11" height="11" viewBox="0 0 11 11"><path d="M1 1h9v9H1z" fill="#cfe3a0" stroke="#333" stroke-width="1.500" /><path d="M3 8l5-6" stroke="#4c8a3a" /></svg></button>
            <button class="vb" aria-label="Layout view"><svg width="11" height="11" viewBox="0 0 11 11"><path d="M1.500 1h6l2 2v7h-8z" fill="#fff" stroke="#333" stroke-width="1.300" /><path d="M4 4h4v4H4z" fill="#6a9ac8" /></svg></button>
            <span class="vsep"></span>
            <button class="vb" aria-label="Refresh"><svg width="12" height="12" viewBox="0 0 12 12"><path d="M1.500 5a4.500 4.500 0 018-2M10.500 7a4.500 4.500 0 01-8 2M10 0v3.500H6.500M2 12V8.500h3.500" fill="none" stroke="#1d5a9e" stroke-width="1.500" /></svg></button>
            <button class="vb" aria-label="Pause"><svg width="10" height="9" viewBox="0 0 10 9"><path d="M2.500 0v9M7 0v9" stroke="#1f55a8" stroke-width="2.200" /></svg></button>
            <span class="hline"></span>
          </div>
          <span class="corner"></span>
        </div>

        <div class="dock">
          <button class="docktab cat">{@render svg('wCat')}<span>Catalog</span></button>
          <button class="docktab">{@render svg('wSearch')}<span>Search</span></button>
        </div>
      </section>

      <div class="pagebar">
        <span class="grip"></span>
        {@render items(pageBar)}
        <button class="over" aria-label="Toolbar options"></button>
      </div>
      <footer class="status"><span></span><span></span><output>92,67&nbsp; 9,351 Decimal Degrees</output><i class="sizer"></i></footer>

      <div class="ctx" role="menu">
        {#each ctx as m}
          {#if m === 0}
            <hr />
          {:else}
            <button class="mi" class:hot={m.hot} disabled={m.off} role="menuitem">
              <span class="mic">{#if m.i}{@render svg(m.i)}{/if}</span>{m.n}{#if m.sub}<i class="tri"></i>{/if}
            </button>
          {/if}
        {/each}
      </div>
      <div class="submenu" role="menu"><button class="mi hot" role="menuitem">Join...</button></div>
      <div class="tip" role="tooltip"><b>Join</b><p>Join data to this layer or standalone table based on a common attribute, spatial location or existing relationship class.</p></div>
    </main>

    <section class="word">
      <header class="wtitle">
        <svg width="21" height="21" viewBox="0 0 21 21" fill="none" stroke="#7aa3e0" stroke-width="1.400"><path d="M7 5V1h13v19H7v-4M12 6h8M12 10.500h8M12 15h8" /><rect x="1" y="5" width="11" height="11" fill="#5f8fd8" /><path d="M3 8l1.500 5L6.500 8l2 5L10 8" stroke="#174ea6" /></svg>
        <span class="more2">»</span>
        <span class="fname">LKP_VDS B_ACAR...</span>
        {@render chev()}
        <span class="fill"></span>
        <svg class="find" width="18" height="19" viewBox="0 0 18 19" fill="none" stroke="currentColor" stroke-width="1.400"><circle cx="11" cy="7" r="6" /><path d="M7 11.500L1 18" /></svg>
        <svg class="avatar" width="30" height="30" viewBox="0 0 30 30"><circle cx="15" cy="15" r="14.500" fill="#2ba80c" stroke="#cdebc4" /><path d="M15 19l6-10 8 8a14 14 0 01-13 12z" fill="#1c7a08" /><path d="M10 10h4v4h-4zM17 10h4v4h-4zM14 14h3v2h2v5h-2v-2h-3v2h-2v-5h2z" fill="#0b1508" /></svg>
        <button aria-label="Minimize"><svg width="13" height="13" viewBox="0 0 13 13"><path d="M0 6.500h13" stroke="currentColor" stroke-width="1.300" /></svg></button>
        <button aria-label="Maximize"><svg width="13" height="14" viewBox="0 0 13 14"><rect x="1" y="1" width="11" height="12" rx="2" fill="none" stroke="currentColor" stroke-width="1.300" /></svg></button>
        <button aria-label="Close"><svg width="13" height="13" viewBox="0 0 13 13"><path d="M.5.5l12 12M12.500.5l-12 12" stroke="currentColor" stroke-width="1.200" /></svg></button>
      </header>
      <nav class="wtabs">
        <button class="filetab">File</button>
        <button class="hometab">Home</button>
        {#each tabs as t}<button class="tab">{t}</button>{/each}
        <button class="scrolltab" aria-label="More tabs"><svg width="6" height="8" viewBox="0 0 6 8"><path d="M1 1l3.500 3L1 7" fill="none" stroke="#222" stroke-width="1.300" /></svg></button>
      </nav>
      <div class="ribbon">
        <div class="grp clip">
          <div class="cliprow">
            <button class="big low">
              <svg width="36" height="38" viewBox="0 0 36 38" fill="none"><path d="M3 5h24v30H3z" fill="#ffe2a8" stroke="#e8912d" stroke-width="2" /><path d="M6 8h18v24H6z" fill="#fff" /><path d="M8 9V5h4c1-5 6-5 7 0h4v4z" fill="#f4f4f4" stroke="#777" stroke-width="1.500" /><path d="M19 16h16v21H19z" fill="#fafafa" stroke="#555" stroke-width="1.500" /></svg>
              <span>Paste</span>{@render chev('sm')}
            </button>
            <div class="minis">
              <button aria-label="Cut"><svg width="14" height="20" viewBox="0 0 14 20" fill="none" stroke="#a9a9a9" stroke-width="1.300"><path d="M3 0l6 13M11 0L5 13" /><circle cx="3.500" cy="16" r="2.500" /><circle cx="10.500" cy="16" r="2.500" /></svg></button>
              <button aria-label="Copy"><svg width="20" height="20" viewBox="0 0 20 20" fill="#f6f6f6" stroke="#a9a9a9" stroke-width="1.300"><path d="M1 1h7v14H1zM8 5h7l4 4v10H8zM15 5v4h4M11 12h5M11 15h5" /></svg></button>
              <button aria-label="Format painter"><svg width="20" height="20" viewBox="0 0 20 20" fill="none"><path d="M1 10l9-3 4 5-6 7-2-3-2 1-1-3z" fill="#ffd9a0" stroke="#e07b18" stroke-width="1.600" /><path d="M10 6l5 6 2-3-1-2 4-5-2-1-4 4-2-1z" fill="#eee" stroke="#444" stroke-width="1.300" /></svg></button>
            </div>
          </div>
          <div class="cap"><span>Clipboard</span><svg width="11" height="11" viewBox="0 0 11 11" fill="none" stroke="#333" stroke-width="1.200"><path d="M1 9V1h9M4 4l6 6M10 5.500V10H5.500" /></svg></div>
        </div>
        <div class="grp font">
          <button class="big"><svg width="40" height="38" viewBox="0 0 40 38" fill="none"><path d="M10 26L20 1l10 25M13 18h14" stroke="#333" stroke-width="1.600" /><path d="M0 28h40v10H0z" fill="#222" /></svg><span>Font</span>{@render chev('sm')}</button>
        </div>
        <div class="grp para">
          <button class="big"><svg width="36" height="38" viewBox="0 0 36 38" fill="none" stroke="#444" stroke-width="1.600"><path d="M0 5h36M5 11h26M0 18h36M5 24h26M0 30h36" /></svg><span>Paragraph</span>{@render chev('sm')}</button>
        </div>
        <div class="grp sty">
          <button class="big low"><svg width="38" height="38" viewBox="0 0 38 38" fill="none"><path d="M1 33L13 4l7 20M6 22h13" stroke="#333" stroke-width="2.500" /><path d="M20 28l13-16c2-2 4-1 3 1L24 31z" fill="#fff" stroke="#555" stroke-width="1.300" /><path d="M10 36c3-1 2-8 8-8 4 0 5 5 2 7-3 3-7 2-10 1z" fill="#5fb0ea" stroke="#1d6cb0" /></svg><span>Styles</span>{@render chev('sm')}</button>
          <div class="cap"><span>Styles</span><svg width="11" height="11" viewBox="0 0 11 11" fill="none" stroke="#333" stroke-width="1.200"><path d="M1 9V1h9M4 4l6 6M10 5.500V10H5.500" /></svg></div>
        </div>
        <div class="grp edi">
          <button class="big"><svg width="38" height="38" viewBox="0 0 38 38" fill="none" stroke="#444" stroke-width="1.600"><circle cx="24" cy="14" r="13" fill="#fafafa" /><path d="M15 23L1 37" /></svg><span>Editing</span>{@render chev('sm')}</button>
        </div>
        <div class="grp addi">
          <button class="big low"><svg width="36" height="38" viewBox="0 0 36 38" fill="none" stroke="#d9532c" stroke-width="1.600"><path d="M1 2h34v35H1zM5 6h11v11H5zM20 6h11v11H20zM5 21h11v12H5zM20 21h11v12H20z" /></svg><span>Add-ins</span></button>
          <div class="cap"><span>Add-ins</span></div>
        </div>
        <button class="collapse" aria-label="Collapse ribbon">{@render chev()}</button>
      </div>
      <div class="notice">
        <svg width="20" height="20" viewBox="0 0 20 20" fill="none"><circle cx="10" cy="10" r="9" fill="#eaf6fd" stroke="#1e8bcd" stroke-width="1.600" /><path d="M10 8.500V15M10 5v2" stroke="#1e78b8" stroke-width="2" /></svg>
        <strong>MISSING PROOFING TOOLS</strong>
        <a href="#proofing">Text in Indonesian is not being checked. Do you want to download proofing tools and future updates?</a>
        <button class="pill">Download</button>
        <button class="pill">Don't show again</button>
        <button class="nx" aria-label="Dismiss"><svg width="12" height="12" viewBox="0 0 13 13"><path d="M.5.5l12 12M12.500.5l-12 12" stroke="#222" stroke-width="1.200" /></svg></button>
      </div>

      <div class="hruler">
        <span class="tabsel"></span>
        <svg width="578" height="29" viewBox="0 0 578 29">
          <rect x="53" y="4" width="423" height="18" fill="#fff" />
          {#each Array(70) as _, k}
            {@const x = 4 + k * 8.25}
            {#if k % 2 === 0 && (k % 4 === 0 || k < 8 || k > 58)}
              <path d={`M${x} 9v8`} stroke="#666" />
            {:else if k % 2 === 1}
              <path d={`M${x} 12v2`} stroke="#666" stroke-width="2" />
            {/if}
          {/each}
          {#each hNums as n}<text x={87 + (n - 1) * 33} y="18" text-anchor="middle">{n}</text>{/each}
          <path d="M43 6h8v14h-8zM479 6h8v14h-8z" fill="#888" />
          <path d="M74 1h13v4l-6 5 6 5v11H74V15l6-5-6-5zM74 20h13" fill="#fff" stroke="#777" />
          <path d="M472 20l7-7 7 7v3h-14z" fill="#fff" stroke="#777" />
        </svg>
      </div>
      <div class="docarea">
        <svg class="vruler" width="28" height="578" viewBox="0 0 28 578">
          <rect x="3" y="0" width="18" height="578" fill="#f8f8f8" />
          <rect x="3" y="318" width="18" height="9" fill="#e4e4e4" />
          {#each vNums as n}
            {@const y = 19 + (n - 5) * 33}
            <text transform={`translate(17 ${y}) rotate(-90)`} text-anchor="middle">{n}</text>
            <path d={`M9 ${y + 17}h6`} stroke="#666" />
            <path d={`M12 ${y + 10}h2M12 ${y + 24}h2`} stroke="#666" stroke-width="2" />
          {/each}
        </svg>
        <article class="page">
          <div class="box first">
            <div class="figs">
              <div class="figtree">
                <span class="l2">Browse for more...</span>
                <span class="l1"><i class="mx"></i><mark>New Maps</mark></span>
                <span class="l2">My Templates</span>
                <span class="l1b"><i class="mx"></i>Templates</span>
                <span class="l3"><i class="mx"></i>Standard Page Sizes</span>
                <span class="l4">Architectural Pag</span>
                <span class="l4">ISO (A) Page Siz</span>
              </div>
              <div class="figmap">
                <div class="thumb"><svg width="32" height="40" viewBox="0 0 32 40"><path d="M1 1h21l9 9v29H1z" fill="#a6cdf0" stroke="#5b93c6" /><path d="M22 1v9h9" fill="#3f86c8" /><path d="M4 4h16v8h8v24H4z" fill="#bcdcf7" /></svg></div>
                <small>Blank Map</small>
              </div>
            </div>
            <div class="li"><span>3.</span><div>
              <p class="just"><u>Menambahkan</u> data <u>shp</u> <u>geologi</u> yang <u>telah</u> <u>diunduh</u> <u>ke</u> <u>dalam</u> layer</p>
              <p><u>arcmap</u> <u>dengan</u> <u>klik</u> <em>add data</em> <span class="addic">{@render svg('add', 16)}<i></i></span></p>
            </div></div>
            <div class="adddata">
              <b>Add Data</b>
              <div class="look"><span>Look in:</span><span class="lookbox">{@render svg('folder', 18)}<span>Indonesia_prov28</span>{@render chev()}</span>{@render svg('up', 18)}{@render svg('home', 18)}</div>
              <div class="filelist">{@render svg('shp', 18)}<mark>Indonesia_prov38.shp</mark></div>
            </div>
            <div class="li last"><span>4.</span><p><u>Mengatur</u></p></div>
          </div>
          <h3><span>IV.</span>HASIL PRAKTIKUM (TERLAMPIR)</h3>
          <div class="box second">
            <div class="num"><span>1.</span>Peta Geologi</div>
            <div class="num"><span>2.</span>Peta penggunaan lahan</div>
          </div>
          <h3><span>V.</span>PEMBAHASAN</h3>
          <div class="box third">
            <p class="just ind">Peta <u>tematik</u> <u>kualitatif</u> <u>merupakan</u> salah <u>satu</u> <u>jenis</u> <u>peta</u> yang</p>
            <p class="just"><u>digunakan</u> <u>untuk</u> <u>menggambarkan</u> <u>informasi</u> <u>berdasarkan</u> <u>kategori</u> <u>tertentu</u></p>
            <p class="just">(Ulfah dkk., 2020). Berbeda dengan peta kuantitatif yang menampilkan</p>
          </div>
        </article>
      </div>
      <footer class="wstatus">
        <span class="pageno">Page 4 of 10</span>
        <button class="focus"><svg width="18" height="18" viewBox="0 0 18 18" fill="none" stroke="#444" stroke-width="1.300"><path d="M4 1H1v3M14 1h3v3M4 17H1v-3M14 17h3v-3M5 3h5l3 3v9H5zM10 3v3h3" /></svg>Focus</button>
        <button class="view" aria-label="Read mode"><svg width="17" height="17" viewBox="0 0 17 17" fill="none" stroke="#444" stroke-width="1.200"><path d="M1 2h6l1.500 1L10 2h6v12h-6l-1.500 2L7 14H1zM8.500 3v12M3 5h4M3 7.500h4M3 10h4M10.500 5h4M10.500 7.500h4M10.500 10h4" /></svg></button>
        <button class="view sel" aria-label="Print layout"><svg width="15" height="18" viewBox="0 0 15 18" fill="#fff" stroke="#333" stroke-width="1.300"><path d="M1 1h13v16H1zM3 4h9M3 6.500h9M3 9h9M3 11.500h9M3 14h9" /></svg></button>
        <button class="view" aria-label="Web layout"><svg width="18" height="18" viewBox="0 0 18 18" fill="none" stroke="#444" stroke-width="1.200"><path d="M7 15H1V1h14v5M1 4h14M3 7h7M3 9.500h5M3 12h4" /><circle cx="12" cy="12" r="5" fill="#555" /><path d="M7 12h10M12 7c-3 3-3 7 0 10 3-3 3-7 0-10" stroke="#eee" stroke-width=".8" /></svg></button>
        <button class="zb" aria-label="Zoom out"><svg width="10" height="10" viewBox="0 0 10 10"><path d="M0 5h10" stroke="#333" /></svg></button>
        <input class="zoom" type="range" min="10" max="190" value="70" aria-label="Zoom" />
        <button class="zb" aria-label="Zoom in"><svg width="10" height="10" viewBox="0 0 10 10"><path d="M0 5h10M5 0v10" stroke="#333" /></svg></button>
        <span class="pct">70%</span>
      </footer>
    </section>
  </div>

  <div class="taskbar">
    <div class="apps">
      <button aria-label="Start"><svg width="30" height="30" viewBox="0 0 30 30"><path d="M0 0h14v14H0zM16 0h14v14H16z" fill="#6fd0fb" /><path d="M0 16h14v14H0zM16 16h14v14H16z" fill="#2aa7f3" /></svg></button>
      <button class="run" aria-label="File Explorer"><svg width="30" height="28" viewBox="0 0 30 28"><path d="M0 2q0-2 2-2h8l3 4h-13z" fill="#e0a100" /><path d="M0 5h12l2-2h14q2 0 2 2v21H0z" fill="#fccf47" /><path d="M5 27v-5q0-3 3-3h14q3 0 3 3v5z" fill="#1374ce" /><path d="M9 22.500h12" stroke="#0b4d92" /></svg></button>
      <button class="run chrome" aria-label="Chrome"><svg width="38" height="38" viewBox="-4 0 38 38"><circle cx="15" cy="19" r="15" fill="#fbbc05" /><path d="M15 4a15 15 0 00-13 7.500L9 22l6-10h13A15 15 0 0015 4z" fill="#e33b2e" /><path d="M2 11.500A15 15 0 0014 34l6-10.500-11-1z" fill="#29a046" /><circle cx="15" cy="19" r="7" fill="#fff" /><circle cx="15" cy="19" r="5.500" fill="#3a78ea" /><circle cx="25" cy="9" r="9" fill="#1d7388" /><path d="M19 8c4-4 6 2 11-2M19 12c5-3 6 2 11-1" stroke="#7ecbd6" fill="none" /></svg></button>
      <button aria-label="Firefox"><svg width="30" height="30" viewBox="0 0 30 30"><path d="M15 29C6 29 1 23 1 16c0-5 2-8 3-10l3 3c2-2 5-2 6-2 2-3 3-5 6-7 1 4 10 7 10 16 0 8-6 13-14 13z" fill="#ff8a1f" /><path d="M19 0c1 4 10 7 10 16-1-4-4-6-6-8-2-3-5-4-4-8z" fill="#ffd53d" /><path d="M1 16c1 8 8 11 14 11s12-4 14-10c-1 8-7 12-14 12S1 24 1 16z" fill="#ee2f70" /><circle cx="15" cy="16" r="6.500" fill="#7c3fe0" /><path d="M6 10c4-1 8 1 10 3-4 0-4 4-8 4-3 0-4-3-2-7z" fill="#ffa32a" /></svg></button>
      <button aria-label="Edge"><svg width="30" height="30" viewBox="0 0 30 30"><circle cx="15" cy="15" r="15" fill="#0f6fc5" /><path d="M1 11C4 2 12 0 17 0c8 1 13 6 13 13 0 5-4 7-8 7s-5-2-4-4c1-1 1-6-5-6-6-1-11 1-12 1z" fill="#35c1d0" /><path d="M22 2c5 3 8 7 8 11 0 5-4 7-8 7s-5-2-4-4c3-4 5-8 4-14z" fill="#63d45c" /><path d="M12 10c-4 3-4 12 6 15 4 0 7-1 9-2-3 5-8 7-12 7-8-2-10-14-3-20z" fill="#0b4f9a" /><path d="M15 12c5-1 4 3 3 4s0 4 4 4c3 0 5-1 6-2-2 5-10 6-13 1-1-2-1-5 0-7z" fill="#0a1208" /></svg></button>
      <button class="run" aria-label="Command Prompt"><svg width="28" height="24" viewBox="0 0 28 24"><path d="M.5.5h27v23H.5z" fill="#050505" stroke="#a9a9a9" /><path d="M1 1h26v2H1z" fill="#d8d8d8" /><path d="M4 7v2M6 6l2 4M10 10h4" stroke="#ddd" fill="none" /></svg></button>
      <button class="active" aria-label="ArcMap">{@render svg('arcmap', 30)}</button>
      <button class="run" aria-label="Word"><svg width="30" height="28" viewBox="0 0 30 28"><path d="M8 0h22v7H8z" fill="#41a5ee" /><path d="M8 7h22v7H8z" fill="#2b7cd3" /><path d="M8 14h22v7H8z" fill="#185abd" /><path d="M8 21h22v7H8z" fill="#103f91" /><rect x="0" y="6" width="16" height="16" rx="1" fill="#185abd" /><path d="M3 10l2.500 8L8 11l2.500 7L13 10" stroke="#fff" stroke-width="1.800" fill="none" /></svg></button>
    </div>
    <div class="tray">
      <svg width="14" height="9" viewBox="0 0 14 9" fill="none"><path d="M1 8l6-6 6 6" stroke="#fff" stroke-width="1.800" /></svg>
      <svg width="21" height="17" viewBox="0 0 21 17" fill="none"><path d="M4 14a4 4 0 010-8c2-5 9-5 11-1 5 0 6 8 1 9z" fill="#8a8a8a" /><path d="M2 1l17 15" stroke="#fff" stroke-width="1.500" /></svg>
      <svg class="wifi" width="20" height="16" viewBox="0 0 20 16" fill="none" stroke="#fff" stroke-width="1.800"><path d="M1 6c5-6 13-6 18 0M4 9c4-4 8-4 12 0M7 12c2-2 4-2 6 0" /><circle cx="10" cy="14" r="1" fill="#fff" /></svg>
      <svg width="20" height="16" viewBox="0 0 20 16" fill="none" stroke="#fff" stroke-width="1.500"><path d="M1 5h3l4-4v14l-4-4H1zM11 5c2 2 2 4 0 6" /><path d="M13.500 3c3 3 3 7 0 10M16 1c4 4 4 10 0 14" stroke="#555" /></svg>
      <svg width="21" height="17" viewBox="0 0 21 17" fill="none"><path d="M10 4h6q2 0 2 2v6q0 2-2 2H4q-2 0-2-2v-1" stroke="#fff" stroke-width="1.600" /><path d="M20 7v4" stroke="#fff" stroke-width="1.600" /><path d="M8 0c2 5 2 11-2 12S0 9 2 6s5-3 6-6z" fill="#fff" /><path d="M2 14l4-7" stroke="#111" /></svg>
      <time>09:32<br />25/04/2025</time>
    </div>
  </div>
</div>

<style>
  :global(body) { margin: 0; overflow: hidden; }
  * { box-sizing: border-box; }
  button, select, input { font: inherit; color: inherit; padding: 0; margin: 0; border: 0; background: none; border-radius: 0; }
  h1, h2, h3, p, ul { margin: 0; padding: 0; font-weight: 400; }
  svg { display: block; flex: none; }
  i, em { font-style: normal; }
  .fill { flex: 1; }
  .desktop { height: 100vh; display: grid; grid-template-rows: minmax(0, 1fr) 60px; background: #0b0c02; font: 14px/18px 'Open Sans', 'Noto Sans', sans-serif; color: #111; }
  .windows { display: grid; grid-template-columns: minmax(0, 1304fr) minmax(0, 611fr) 5px; min-height: 0; }

  /* ArcMap window */
  .arcmap { position: relative; z-index: 1; display: flex; flex-direction: column; min-height: 0; background: #f0f0f0; border: 1px solid #6d6d6d; border-left: 3px double #4f5a60; box-shadow: 2px 0 24px #0007; }
  .title { flex: none; height: 38px; display: flex; align-items: center; padding: 0 2px 0 10px; background: #f3f3f3; }
  .title h1 { font-size: 14px; margin-left: 6px; }
  .title button { width: 58px; height: 38px; display: grid; place-items: center; }
  .menubar { flex: none; height: 31px; display: flex; align-items: center; background: linear-gradient(90deg, #f0f0f0, #fcfcfc); padding-left: 6px; }
  .menubar button { padding: 0 10px; white-space: nowrap; }
  .menubar button:nth-child(n + 8) { padding: 0 10px 0 11px; }
  .bars { flex: none; background: #fafafa; }
  .barrow { display: grid; height: 32px; }
  .r1, .r3 { height: 33px; }
  .r1 { grid-template-columns: 776px 243px minmax(0, 1fr) 54px; }
  .r2 { grid-template-columns: 645px 402px minmax(0, 1fr); }
  .r3 { grid-template-columns: 520px minmax(0, 1fr) 54px; }
  .bar, .pagebar { display: flex; align-items: center; min-width: 0; padding: 0 0 1px 4px; background: linear-gradient(#fcfcfc, #f8f8f8 60%, #ececec); }
  .grip { flex: none; width: 7px; height: 20px; background: radial-gradient(circle, #b4b4b4 1px, transparent 2px) 0 0 / 4px 5px repeat-y; }
  .ib { flex: none; width: 28px; height: 27px; display: grid; place-items: center; border: 1px solid transparent; }
  .ib.on { background: #cfe6f9; border: 1px solid #3897e8; }
  .sep { flex: none; width: 1px; height: 18px; margin: 0 2px 0 3px; background: #c4c4c4; }
  .arrow { flex: none; width: 14px; height: 24px; display: grid; place-items: center; }
  .arrow::before, .tmenu i { content: ''; border: 4px solid transparent; border-top: 4px solid #111; border-bottom: 0; }
  .arrow.dim::before { border-top-color: #b5b5b5; }
  .tmenu { display: flex; align-items: center; gap: 3px; padding: 0 5px 0 7px; white-space: nowrap; }
  .letter { flex: none; width: 28px; font: bold 18px/22px 'Liberation Serif', serif; color: #222; }
  .lbig { font-size: 22px; }
  .lit { font-style: italic; }
  .lun { text-decoration: underline; }
  .lcol { border-bottom: 4px solid #111; width: 24px; height: 23px; line-height: 20px; margin: 0 2px; }
  .xy { display: flex; flex-direction: column; align-items: center; justify-content: center; font-size: 11px; line-height: 11px; font-weight: 700; color: #2a65a8; }
  .over { position: relative; flex: none; width: 14px; height: 29px; background: linear-gradient(#efefef, #a9a9a9); }
  .over::after { content: ''; position: absolute; left: 3px; bottom: 3px; width: 8px; height: 9px; border-top: 2px solid #111; background: linear-gradient(#111, #111) 50% 3px / 6px 2px no-repeat, linear-gradient(#111, #111) 50% 5px / 2px 2px no-repeat; }
  .over.more::before { content: '››'; position: absolute; left: 2px; top: 0; font: bold 13px/10px 'Open Sans', sans-serif; }
  .combo { flex: none; display: flex; align-items: center; height: 28px; background: #fff; border: 1px solid #9a9a9a; border-radius: 2px; padding: 0 5px 0 3px; color: #777; }
  .combo select { appearance: none; flex: 1; min-width: 0; height: 24px; color: #111; }
  .scale { width: 186px; margin: 0 0 0 1px; }
  .georef { width: 224px; border-color: #e9e9e9; background: #f9f9f9; color: #c4c4c4; }
  .layerpick { flex: 1 1 0; border: 2px solid #888; padding: 0; height: 27px; margin-right: 3px; gap: 4px; color: #111; }
  .layerpick + .fill { display: none; }
  .drop { flex: none; width: 20px; height: 23px; display: grid; place-items: center; background: #eee; border: 1px solid #777; border-top-color: #fff; border-left-color: #fff; }
  .drop::before { content: ''; border: 5px solid transparent; border-top-color: #111; border-bottom: 0; }
  .face { width: 212px; gap: 4px; }
  .face select { font-size: 12px; }
  .size { width: 57px; margin-left: 1px; }

  .body { flex: 1; min-height: 0; display: grid; grid-template-columns: 250px minmax(0, 1fr) 26px; }
  .toc { min-width: 0; min-height: 0; display: flex; flex-direction: column; }
  .tochead { flex: none; height: 25px; display: flex; align-items: center; gap: 10px; padding: 0 6px 0 5px; background: linear-gradient(90deg, #c0d0de, #d9e5f2); }
  .tochead h2 { flex: 1; font-size: 14px; color: #333; }
  .toctools { flex: none; height: 32px; display: flex; align-items: center; padding-left: 4px; background: #f7f7f7; }
  .toctools .sep { margin: 0 1px 0 3px; }
  .tree { flex: 1; min-height: 0; display: flex; flex-direction: column; background: #fff; border: 1px solid #8e959c; border-width: 2px 2px 1px 1px; margin-bottom: 2px; }
  .tree ul { flex: 1; list-style: none; overflow: hidden; padding-top: 2px; }
  .tree li { height: 22px; display: flex; align-items: center; white-space: nowrap; overflow: hidden; }
  .d0 { padding-left: 11px; gap: 6px; }
  .d1 { padding-left: 34px; gap: 6px; }
  .d1 .exp { margin-right: 2px; }
  .tree .d2 { padding-left: 58px; height: 24px; }
  .d2 input { appearance: none; width: 14px; height: 14px; margin: 0 7px 0 11px; border: 2px solid #222; background: url("data:image/svg+xml,%3Csvg xmlns='http://www.w3.org/2000/svg' viewBox='0 0 10 10'%3E%3Cpath d='M1 5l3 3 5-7' fill='none' stroke='%23000' stroke-width='2'/%3E%3C/svg%3E"); }
  .d2 label { background: #0078d7; color: #fff; height: 22px; line-height: 20px; padding: 0 2px; }
  .d3 { padding-left: 98px; }
  .swatch { width: 18px; height: 13px; background: #d3c8fa; border: 1px solid #777; }
  .d4 { padding-left: 76px; gap: 10px; }
  .exp { flex: none; width: 11px; height: 11px; border: 1px solid #999; background: linear-gradient(#4a5fa0, #4a5fa0) center / 5px 1px no-repeat #f3f3f3; }
  .tocscroll { height: 21px; background: #f0f0f0; padding: 8px 0 0 23px; }
  .tocscroll i { display: block; width: 86px; height: 2px; background: #888; }

  .mapframe { margin: 0 4px 2px 6px; min-height: 0; display: grid; grid-template: minmax(0, 1fr) 22px / minmax(0, 1fr) 20px; border-left: 2px solid #777; border-top: 2px solid #777; }
  .canvas { background: #fff; overflow: hidden; min-width: 0; }
  .map { width: 100%; height: auto; }
  .map path { fill: #d3c8fa; stroke: #6b6b6b; stroke-width: 4; stroke-linejoin: round; }
  .map rect { fill: #6b6b6b; }
  .vscroll { background: #f0f0f0; border-left: 2px solid #fff; padding: 20px 0 22px 7px; }
  .vscroll i { display: block; width: 2px; height: 100%; background: #888; }
  .viewbar { display: flex; align-items: center; background: #f0f0f0; padding-bottom: 2px; }
  .vb { flex: none; width: 21px; height: 20px; display: grid; place-items: center; }
  .vb.on { background: #cce4f9; }
  .vsep { width: 1px; height: 16px; background: #999; margin: 0 4px; }
  .hline { flex: 1; height: 2px; background: #888; margin: 0 23px 0 22px; }
  .corner { background: #f0f0f0; }
  .dock { padding-top: 3px; background: #f8f8f8; display: flex; flex-direction: column; }
  .docktab { width: 26px; height: 88px; display: flex; flex-direction: column; align-items: center; gap: 6px; padding-top: 4px; border: 1px solid #999; border-right: 0; border-radius: 5px 0 0 5px; background: #f0f0f0; color: #777; }
  .docktab span { writing-mode: vertical-rl; font-size: 14px; line-height: 18px; }
  .docktab + .docktab { height: 82px; }
  .pagebar { flex: none; height: 32px; padding-bottom: 3px; background: linear-gradient(90deg, #f3f3f3, #fbfbfb); }
  .showname { width: 155px; border-color: #bbb; color: #bbb; padding: 0 5px 0 2px; }
  .showname select { flex: none; width: 126px; height: 22px; background: linear-gradient(90deg, #0078d7 76px, #f0f0f0 76px); color: #5f6367; margin-right: auto; }
  .status { flex: none; height: 24px; display: flex; justify-content: flex-end; align-items: center; gap: 3px; }
  .status span, .status output { height: 20px; border: 1px solid #f7f7f7; line-height: 18px; }
  .status span { width: 157px; }
  .status span + span { width: 22px; }
  .status output { width: 323px; padding-left: 3px; }
  .sizer { width: 18px; height: 14px; background: radial-gradient(circle, #bbb 1px, transparent 2px) 0 0 / 5px 5px; clip-path: polygon(100% 0, 100% 100%, 0 100%); }

  .ctx { position: absolute; left: 186px; top: 284px; width: 349px; padding: 1px 2px; background: linear-gradient(90deg, #f8f8f8, #eee 34px, #fdfdfd 34px); border: 1px solid #808080; box-shadow: 4px 4px 4px #0005; }
  .mi { display: flex; align-items: center; width: 100%; height: 28px; line-height: 18px; padding: 0 7px 1px 0; text-align: left; white-space: nowrap; border: 1px solid transparent; }
  .mic { width: 40px; padding-left: 4px; }
  .mi:disabled { color: #aaa; }
  .mi.hot { background: #b3d6f2; border-color: #3193e6; }
  .tri { margin-left: auto; border: 5px solid transparent; border-left: 6px solid #111; border-right: 0; }
  .ctx hr { height: 1px; border: 0; background: #c6c6c6; margin: 1px -2px 1px 40px; }
  .submenu { position: absolute; left: 534px; top: 373px; width: 199px; height: 120px; padding: 1px; background: linear-gradient(90deg, #f8f8f8, #eee 34px, #fdfdfd 34px); border: 1px solid #808080; box-shadow: 4px 4px 4px #0005; }
  .submenu .mi { padding-left: 40px; }
  .tip { position: absolute; left: 570px; top: 410px; width: 238px; height: 145px; padding: 8px 8px 0 5px; background: linear-gradient(#fff, #c9d7ee); border: 1px solid #777; border-radius: 2px; box-shadow: 5px 5px 4px #0006; color: #555; }
  .tip p { line-height: 19px; margin: 10px 0 0 10px; }

  /* Word window */
  .word { display: flex; flex-direction: column; min-width: 0; min-height: 0; background: #f0f0f0; border: 1px solid #777; border-left: 0; border-radius: 8px; overflow: hidden; }
  .wtitle { flex: none; height: 60px; display: flex; align-items: center; padding: 0 1px 0 18px; background: #185abd; color: #7aa3e0; }
  .wtitle button { width: 60px; height: 60px; display: grid; place-items: center; }
  .more2 { margin: 0 31px 3px 26px; font-size: 18px; }
  .fname { white-space: nowrap; margin-right: 16px; }
  .find { margin-right: 48px; }
  .avatar { margin-right: 14px; }
  .wtabs { flex: none; height: 38px; display: flex; align-items: center; padding: 1px 15px 0 20px; font-size: 16px; color: #222; overflow: hidden; }
  .wtabs button { flex: none; }
  .filetab { padding: 0 6px; }
  .hometab { font-weight: 600; margin: 0 5px 0 20px; height: 30px; line-height: 30px; border-bottom: 3px solid #1551a8; }
  .tab { height: 29px; border-left: 1px solid #c9c9c9; padding: 0 6px 0 5px; }
  .wtabs .tab:nth-last-child(2) { flex: 1; min-width: 0; overflow: hidden; text-align: left; padding-right: 0; padding-left: 6px; }
  .wtabs .scrolltab { width: 30px; height: 38px; background: #fff; border: 1px solid #888; display: grid; place-items: center; }
  .ribbon { flex: none; height: 123px; margin: 0 10px 0 9px; display: flex; background: #fff; border-radius: 8px 8px 0 0; border-bottom: 1px solid #ccc; padding: 6px 0 5px; color: #333; }
  .grp { display: flex; flex-direction: column; align-items: center; border-right: 1px solid #ccc; }
  .clip { width: 109px; }
  .font { width: 69px; }
  .para { width: 89px; }
  .sty { width: 73px; }
  .edi { width: 69px; }
  .addi { width: 77px; }
  .cliprow { display: flex; gap: 13px; padding-left: 10px; }
  .big { display: flex; flex-direction: column; align-items: center; gap: 4px; padding-top: 1px; }
  .big.low { padding-top: 4px; }
  .chev.sm { width: 9px; height: 6px; margin-top: 4px; }
  .minis { display: flex; flex-direction: column; gap: 12px; padding-top: 3px; }
  .minis button { width: 20px; height: 20px; display: grid; place-items: center; }
  .cap { margin-top: auto; font-size: 12px; line-height: 12px; display: flex; align-items: center; gap: 16px; padding-left: 4px; }
  .clip .cap { gap: 21px; padding-left: 12px; }
  .addi .cap { padding-left: 0; }
  .collapse { margin: auto 12px 6px auto; }
  .notice { flex: none; height: 164px; margin: 0 10px 0 9px; display: flex; align-items: center; background: #fff9d1; border-radius: 0 0 8px 8px; box-shadow: 0 1px 3px #0003; line-height: 20px; color: #222; padding: 1px 14px 0 15px; }
  .notice strong { font-weight: 400; width: 90px; margin: 0 40px 0 10px; }
  .notice a { flex: none; color: #222; width: 118px; margin-right: 13px; }
  .pill { flex: none; height: 32px; background: #fff; border: 1px solid #8a8a8a; border-radius: 5px; padding: 0 12px; margin-right: 11px; white-space: nowrap; }
  .nx { margin-left: auto; }
  .hruler { flex: none; height: 29px; display: flex; border-bottom: 1px solid #c8c8c8; overflow: hidden; }
  .tabsel { flex: none; width: 29px; border-right: 1px solid #ccc; position: relative; }
  .tabsel::after { content: ''; position: absolute; left: 10px; top: 12px; width: 7px; height: 7px; border: 3px solid #555; border-top: 0; border-right: 0; }
  .hruler text, .vruler text { font-size: 13px; fill: #444; }
  .hruler text { paint-order: stroke; stroke: #fff; stroke-width: 3px; }
  .docarea { flex: 1; min-height: 0; display: flex; overflow: hidden; padding: 0 21px 21px 0; }
  .vruler { box-sizing: content-box; border-right: 1px solid #ccc; margin-bottom: -21px; }
  .page { flex: 1; min-width: 0; background: #fff; overflow: hidden; font: 14px/16px 'Liberation Serif', serif; color: #000; padding: 0 0 0 47px; }
  .page u { text-decoration: underline wavy #e02020 1px; text-underline-offset: 1px; text-decoration-skip-ink: none; }
  .box { border: 1px solid #000; overflow: hidden; }
  .first { width: 438px; border-top: 0; height: 325px; padding-left: 12px; }
  .figs { height: 102px; display: flex; align-items: flex-start; padding-left: 25px; gap: 15px; overflow: hidden; font: 10px/14px 'Open Sans', sans-serif; color: #333; }
  .figtree { width: 144px; height: 102px; overflow: hidden; display: flex; flex-direction: column; justify-content: flex-end; border: 1px solid #999; border-width: 0 3px 0 1px; white-space: nowrap; }
  .figtree span { display: flex; align-items: center; }
  .l2 { padding-left: 37px; }
  .l1 { padding-left: 8px; }
  .l1b { padding-left: 24px; }
  .l3 { padding-left: 39px; }
  .l4 { padding-left: 69px; }
  .mx { flex: none; width: 8px; height: 8px; border: 1px solid #999; margin-right: 6px; background: linear-gradient(#446, #446) center / 4px 1px no-repeat #eee; }
  .l1 mark { background: #0078d7; color: #fff; outline: 2px solid #f00; outline-offset: 1px; line-height: 12px; }
  .figmap { width: 133px; text-align: center; }
  .thumb { height: 83px; border: 2px solid #f00; border-top: 0; background: #bfdcf6; box-shadow: inset 0 0 0 2px #9fc3e6, inset 0 0 0 5px #c5def5, inset 0 0 0 6px #8eb6dc; display: grid; place-items: center; }
  .figmap small { display: block; font-size: 10px; line-height: 14px; }
  .li { display: flex; line-height: 30px; padding-top: 2px; }
  .li > span { width: 21px; flex: none; }
  .li > div { width: 398px; }
  .just { text-align-last: justify; white-space: nowrap; }
  p em { font-style: italic; }
  .addic { display: inline-flex; align-items: center; gap: 4px; padding: 0 2px; background: #f3f3f3; height: 20px; vertical-align: 1px; }
  .addic i { border: 3px solid transparent; border-top-color: #111; border-bottom: 0; }
  .adddata { width: 330px; height: 104px; margin-left: 21px; background: #f1f1f1; font: 13px/18px 'Open Sans', sans-serif; color: #222; display: flex; flex-direction: column; }
  .adddata b { font-weight: 400; padding: 6px 8px 13px; }
  .look { display: flex; align-items: center; padding-left: 4px; gap: 8px; }
  .look > span:first-child { width: 54px; font-size: 12px; }
  .lookbox { width: 209px; height: 24px; display: flex; align-items: center; gap: 3px; background: #fff; border: 1px solid #ccc; padding: 0 4px 0 3px; font-size: 12px; }
  .lookbox .chev { margin-left: auto; color: #888; }
  .filelist { flex: 1; margin: 7px 0 0 5px; display: flex; align-items: flex-start; background: #fff; border: 2px solid #777; border-width: 2px 0 0 2px; font-size: 12px; }
  .filelist mark { background: #0078d7; color: #fff; padding: 0 2px; }
  .li.last { margin-top: 24px; }
  h3 { display: flex; font: bold 14px/24px 'Liberation Serif', serif; margin: 22px 0 4px -47px; }
  h3 span { width: 25px; text-align: right; margin-right: 23px; flex: none; white-space: nowrap; }
  .page .second + h3 { margin-top: 20px; }
  .page .second + h3 span { width: 30px; margin-right: 18px; }
  .second { width: 431px; height: 74px; display: flex; flex-direction: column; gap: 8px; }
  .num { display: flex; }
  .num span { width: 20px; margin-left: 13px; }
  .third { width: 431px; height: 100px; padding: 0 5px 0 7px; display: flex; flex-direction: column; gap: 8px; }
  .ind { padding-left: 42px; }
  .wstatus { flex: none; height: 27px; display: flex; align-items: center; background: #f4f4f4; border-top: 1px solid #c4c4c4; font-size: 12px; color: #444; padding-left: 14px; }
  .pageno { width: 148px; font-size: 13px; }
  .focus { display: flex; align-items: center; gap: 3px; margin-right: 13px; font-size: 13px; }
  .view { width: 50px; height: 26px; display: grid; place-items: center; }
  .view.sel { background: #dedede; }
  .zb { width: 12px; display: grid; place-items: center; }
  .wstatus .view + .zb { margin-left: 6px; }
  .zoom { appearance: none; flex: 1; min-width: 0; height: 16px; margin: 0 5px; background: linear-gradient(#777, #777) center / 100% 1px no-repeat, linear-gradient(#777, #777) center / 1px 8px no-repeat; }
  .zoom::-webkit-slider-thumb { appearance: none; width: 6px; height: 14px; background: #666; }
  .pct { width: 64px; padding-left: 15px; }

  /* Taskbar */
  .taskbar { display: flex; align-items: center; position: relative; background: linear-gradient(90deg, #0e0903, #101203 30%, #0c0f02 60%, #0a1204 68%, #080802); color: #fff; }
  .apps { display: flex; margin: 0 auto 0 calc(50% - 218px); gap: 5px; }
  .apps button { position: relative; width: 50px; height: 50px; display: grid; place-items: center; border-radius: 5px; }
  .apps .chrome { padding-bottom: 4px; }
  .apps .active { background: #2a2b20; box-shadow: 3px 0 0 #1c1d12; }
  .run::after, .active::after { content: ''; position: absolute; left: 21px; bottom: 1px; width: 8px; height: 4px; border-radius: 2px; background: #9a9a95; }
  .active::after { left: 15px; width: 20px; background: #4cc2ff; }
  .tray { display: flex; align-items: center; padding-right: 24px; gap: 10px; }
  .tray svg:first-child { margin-right: 15px; }
  .wifi { margin-left: 10px; }
  .tray time { font-size: 15px; line-height: 20px; text-align: right; margin-left: 8px; }
</style>
